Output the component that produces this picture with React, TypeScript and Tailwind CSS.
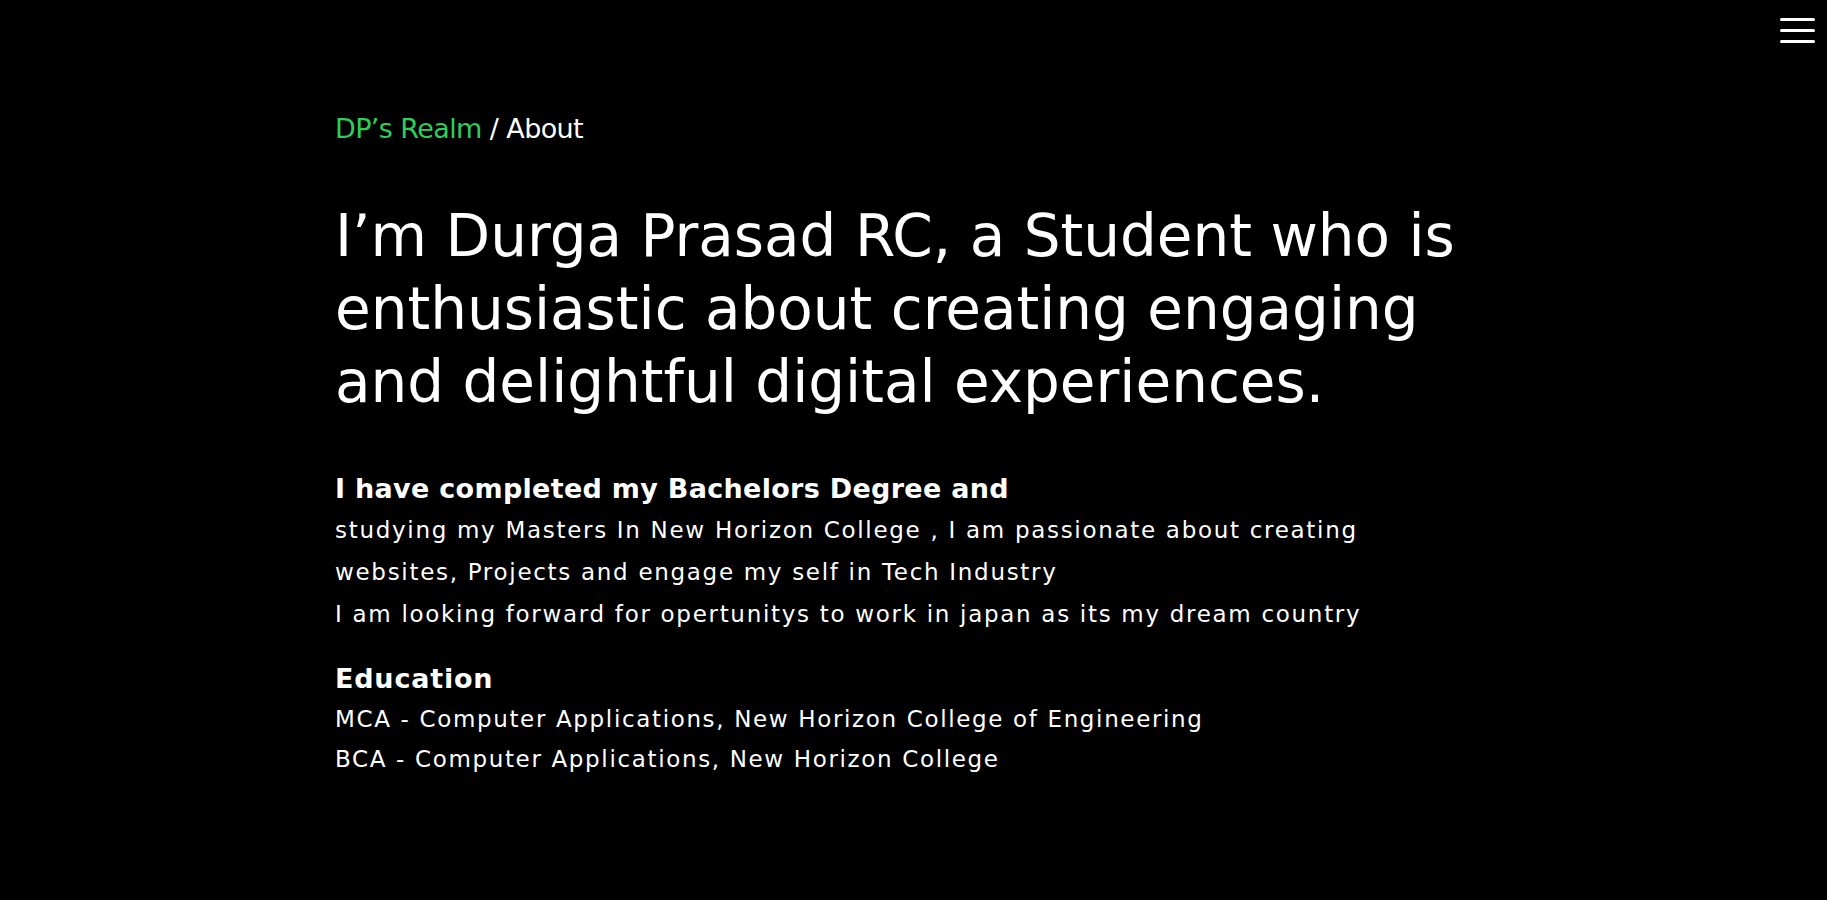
import React from 'react';

const Menu: React.FC = () => (
  <button className="fixed top-[18px] right-[12px] flex flex-col gap-[8px]" aria-label="menu">
    <span className="block h-[3px] w-[35px] rounded-full bg-white" />
    <span className="block h-[3px] w-[35px] rounded-full bg-white" />
    <span className="block h-[3px] w-[35px] rounded-full bg-white" />
  </button>
);

const App: React.FC = () => {
  return (
    <div className="min-h-[900px] bg-black text-white font-['DejaVu_Sans',sans-serif]">
      <Menu />
      <main className="pl-[335px] pt-[115px]">
        <div className="text-[27px] leading-[27px] tracking-[-0.6px]">
          <span className="text-[#2dce5a]">DP’s Realm</span> / About
        </div>

        <h1 className="mt-[58px] text-[58px] leading-[73px] font-normal">
          I’m Durga Prasad RC, a Student who is
          <br />
          enthusiastic about creating engaging
          <br />
          and delightful digital experiences.
        </h1>

        <h2 className="mt-[51px] text-[27px] leading-[38px] font-bold tracking-[0.3px]">
          I have completed my Bachelors Degree and
        </h2>
        <p className="mt-[1px] text-[23px] leading-[42px] tracking-[1.7px]">
          studying my Masters In New Horizon College , I am passionate about creating
          <br />
          websites, Projects and engage my self in Tech Industry
          <br />
          I am looking forward for opertunitys to work in japan as its my dream country
        </p>

        <h3 className="mt-[25px] text-[27px] leading-[38px] font-semibold tracking-[0.8px]">Education</h3>
        <div className="mt-[1px] text-[23px] leading-[40px] tracking-[1.65px]">
          <p>MCA - Computer Applications, New Horizon College of Engineering</p>
          <p>BCA - Computer Applications, New Horizon College</p>
        </div>
      </main>
    </div>
  );
};

export default App;
